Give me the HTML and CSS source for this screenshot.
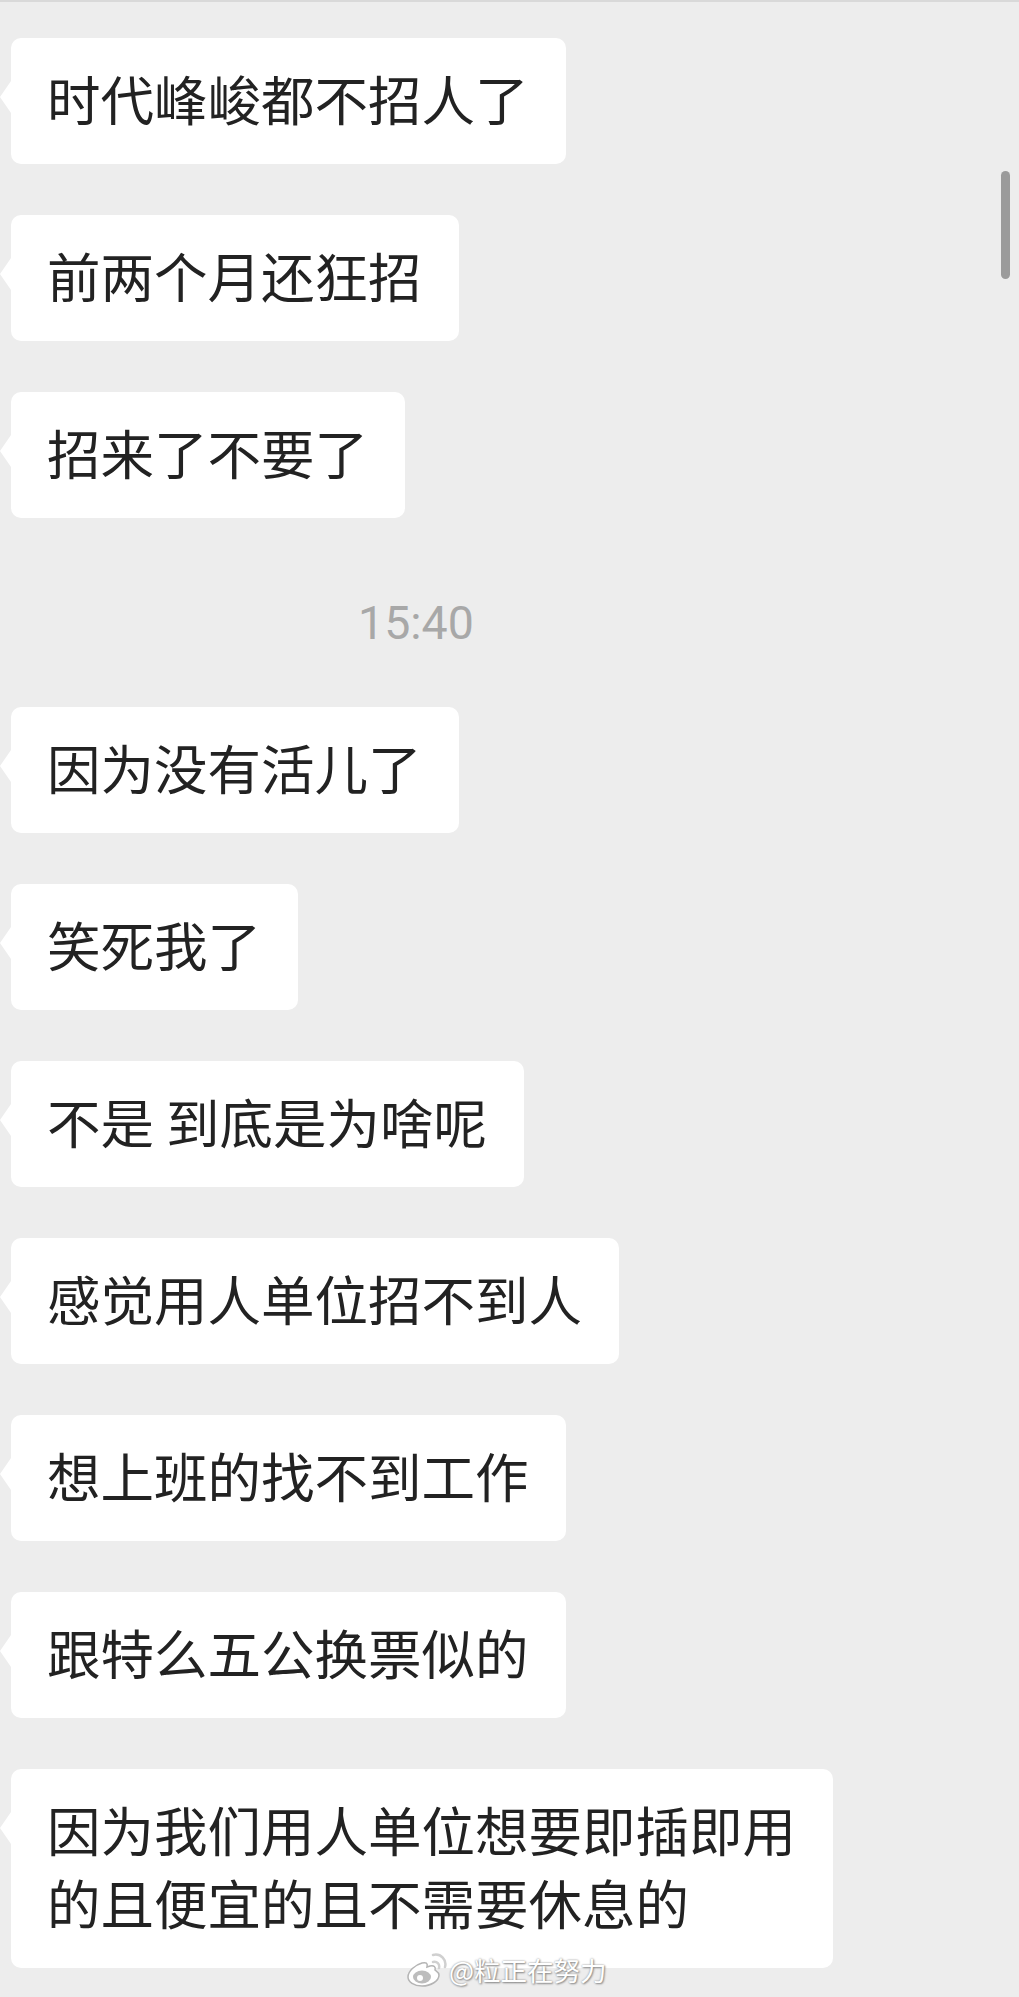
FILE: index.html
```html
<!DOCTYPE html>
<html lang="zh-CN">

<head>
    <meta charset="UTF-8">
    <title>聊天记录</title>
    <link rel="stylesheet" href="styles.css">
</head>

<body>
    <div class="chat">
        <div class="bubble">时代峰峻都不招人了</div>
        <div class="bubble">前两个月还狂招</div>
        <div class="bubble">招来了不要了</div>

        <div class="time">15:40</div>

        <div class="bubble">因为没有活儿了</div>
        <div class="bubble">笑死我了</div>
        <div class="bubble">不是 到底是为啥呢</div>
        <div class="bubble">感觉用人单位招不到人</div>
        <div class="bubble">想上班的找不到工作</div>
        <div class="bubble">跟特么五公换票似的</div>
        <div class="bubble">因为我们用人单位想要即插即用<br>的且便宜的且不需要休息的</div>
    </div>

    <div class="scrollbar"></div>

    <!-- 水印 -->
    <div class="watermark">
        <svg class="weibo-logo" width="40" height="34" viewBox="0 0 40 34" fill="none">
            <path d="M15 10c-7 2-14 8-14 14 0 5 6 9 14 9 9 0 17-5 17-11 0-3-3-4-4-5 1-3-1-5-5-4l-3 1c1-4-1-5-5-4z" fill="#fff" stroke="#b4b4b4" stroke-width="1.5"/>
            <ellipse cx="15" cy="24" rx="9" ry="6.5" fill="#bdbdbd"/>
            <circle cx="13" cy="25" r="3" fill="#fff"/>
            <path d="M26 9c4-1 7 2 6 6M26 2c8-2 14 5 12 12" stroke="#d0d0d0" stroke-width="2.5" stroke-linecap="round"/>
        </svg>
        <span>@粒正在努力</span>
    </div>
</body>

</html>
```

FILE: styles.css
```css
* {
    margin: 0;
    padding: 0;
    box-sizing: border-box;
}

body {
    height: 1997px;
    overflow: hidden;
    position: relative;
    background-color: #ededed;
    border-top: 2px solid #d9d9d9;
    font-family: "Noto Sans CJK SC", sans-serif;
}

.chat {
    display: flex;
    flex-direction: column;
    align-items: flex-start;
    gap: 51px;
    padding: 36px 0 0 11px;
}

.bubble {
    position: relative;
    padding: 23px 37px 30px 36px;
    background-color: #fff;
    border-radius: 10px;
    color: #222;
    font-size: 53.5px;
    line-height: 73px;
    white-space: nowrap;
}

/* 气泡的小三角 */
.bubble::before {
    content: "";
    position: absolute;
    left: -11px;
    top: 43px;
    border-top: 16px solid transparent;
    border-bottom: 16px solid transparent;
    border-right: 11px solid #fff;
}

.time {
    width: 810px;
    margin: 24px 0 3px;
    text-align: center;
    color: #a8a8a8;
    font-family: Roboto, sans-serif;
    font-size: 46.5px;
    line-height: 60px;
}

.scrollbar {
    position: absolute;
    top: 169px;
    left: 1001px;
    width: 9px;
    height: 108px;
    border-radius: 5px;
    background-color: #9b9b9b;
}

.watermark {
    position: absolute;
    left: 407px;
    top: 1950px;
    display: flex;
    align-items: center;
    gap: 2px;
    color: #fff;
    font-size: 26.5px;
    line-height: 36px;
    text-shadow: 0 0 2px #8a8a8a, 1px 1px 2px #8a8a8a;
}

.weibo-logo {
    flex: none;
}
```
